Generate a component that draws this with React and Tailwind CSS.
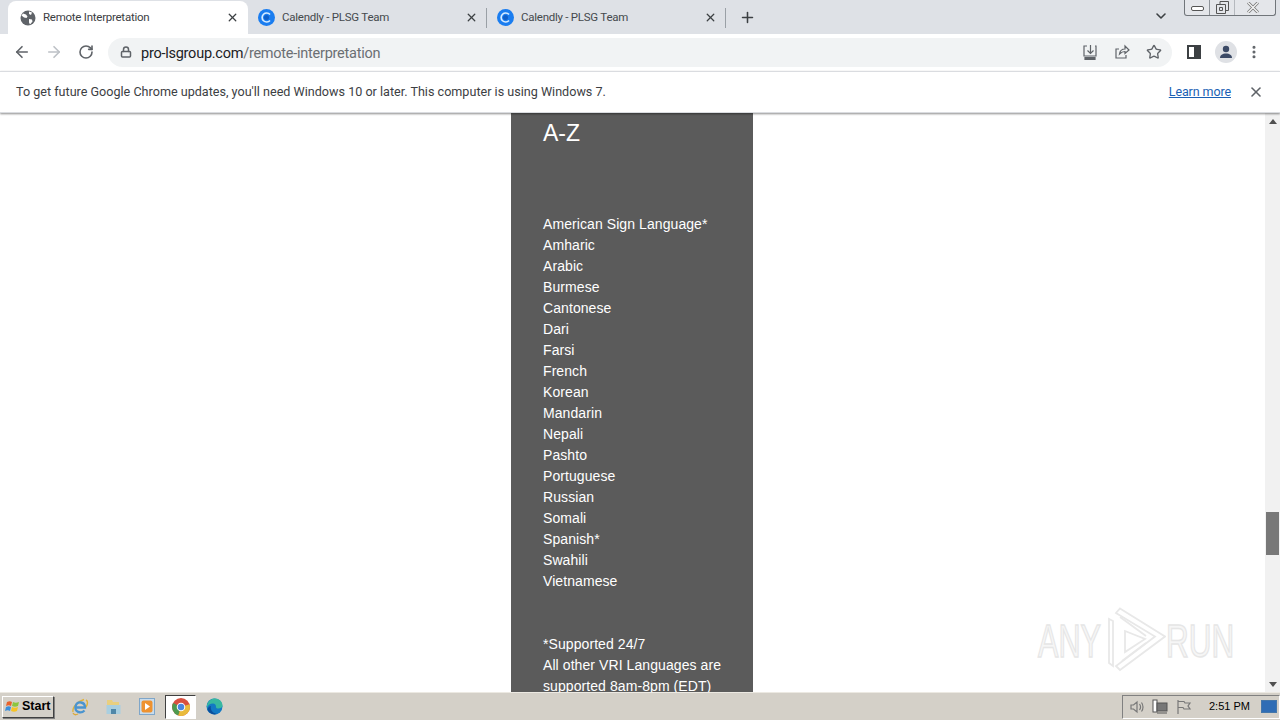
import { ArrowLeft, ArrowRight, RotateCw, Lock, X, Plus, ChevronDown, Star, MoreVertical } from "lucide-react";

const languages = [
  "American Sign Language*",
  "Amharic",
  "Arabic",
  "Burmese",
  "Cantonese",
  "Dari",
  "Farsi",
  "French",
  "Korean",
  "Mandarin",
  "Nepali",
  "Pashto",
  "Portuguese",
  "Russian",
  "Somali",
  "Spanish*",
  "Swahili",
  "Vietnamese",
];

const GlobeIcon = () => (
  <svg width="16" height="16" viewBox="0 0 16 16" className="shrink-0">
    <circle cx="8" cy="8" r="7.5" fill="#5f6368" />
    <path d="M3 3.500l3 1 1.500 2-1 1.500-2.500-.5-2.500-2zM9 9l3 .5.5 2-2.500 3-1-2zM9 1.500l3 1-1 2.500-2-1z" fill="#fff" />
  </svg>
);

const CalendlyIcon = () => (
  <svg width="17" height="17" viewBox="0 0 17 17" className="shrink-0">
    <circle cx="8.500" cy="8.500" r="8.500" fill="#1a7df0" />
    <path d="M12 5.500A4.500 4.500 0 1 0 12 11.500" fill="none" stroke="#d7ecff" strokeWidth="1.700" />
    <circle cx="8.500" cy="8.500" r="2.500" fill="#0f5fc8" />
  </svg>
);

const Tab = ({ icon, title, active, divider }) => (
  <div
    className={`relative flex h-[33px] items-center ${active ? "w-[240px] rounded-t-lg bg-white pl-[12px] pr-[9px]" : "w-[239px] pl-[10px] pr-[9px]"}`}
  >
    {icon}
    <span className={`ml-[7px] flex-1 text-[11.500px] tracking-[-0.25px] ${active ? "text-[#3c4043]" : "text-[#45494d]"}`}>{title}</span>
    <X size={13} strokeWidth={2.4} className="text-[#3c4043]" />
    {divider && <div className="absolute right-0 top-[7px] h-[20px] w-px bg-[#9aa0a6]" />}
  </div>
);

const ChromeLogo = () => (
  <svg width="18" height="18" viewBox="0 0 16 16">
    <circle cx="8" cy="8" r="8" fill="#d9503f" />
    <path d="M8 8L1 4.400A8 8 0 0 0 5.600 15.600z" fill="#4e9a4f" />
    <path d="M8 8l7.600-2.400A8 8 0 0 1 5.600 15.600z" fill="#e9bb3c" />
    <circle cx="8" cy="8" r="3.800" fill="#fff" />
    <circle cx="8" cy="8" r="2.900" fill="#4a86e0" />
  </svg>
);

const EdgeLogo = () => (
  <svg width="17" height="17" viewBox="0 0 17 17">
    <circle cx="8.500" cy="8.500" r="8" fill="#1279c4" />
    <path d="M1 7C2.500 2 6 .5 9 .5c4 0 7.500 3 7.500 7 0 2-2 3-4 3-1.500 0-2.500-.5-2.500-1.500C10 7 9 5.500 7 5.500 4 5.500 1.500 7.500 1 10z" fill="#37b8a0" />
    <path d="M5 8c-1 3 1 7.500 6 8-4 1.500-8-1-9.500-4C2 9 3.500 8 5 8z" fill="#0b4f9c" />
  </svg>
);

const StartFlag = () => (
  <svg width="16" height="15" viewBox="0 0 16 15">
    <path d="M2 3c2-1 3.500-1 5 0L6 7C4.500 6 3 6 1 7z" fill="#e8622c" />
    <path d="M8 3c2 1 3.500 1 6 0l-1 4c-2 1-4 1-6 0z" fill="#8cc63f" />
    <path d="M1 8c2-1 3.500-1 5 0l-1 4c-1.500-1-3-1-5 0z" fill="#3a8fdc" />
    <path d="M7 8c2 1 4 1 6 0l-1 4c-2 1-4 1-6 0z" fill="#f7c325" />
  </svg>
);

const IeLogo = () => (
  <svg width="18" height="18" viewBox="0 0 18 18">
    <path d="M2 14C1 9 7 3 13 1.500M15 2c2 1 2 4 0 7" fill="none" stroke="#e0b23a" strokeWidth="1.400" />
    <path d="M5 9.500h9c0-6-8-7-9.500-1-1 5 5 8 9 4" fill="none" stroke="#4a94cf" strokeWidth="2.300" />
    <path d="M2 15c1 2 3 2 5 1" fill="none" stroke="#d9a93c" strokeWidth="1.300" />
  </svg>
);

const FolderIcon = () => (
  <svg width="17" height="17" viewBox="0 0 17 17">
    <path d="M2 2h5l1 2h6v4H2z" fill="#e9cf7f" />
    <path d="M1.500 7h14v9h-14z" fill="#a9cfe0" />
    <path d="M6 16v-5h5v5z" fill="#4f87a8" />
  </svg>
);

const MediaIcon = () => (
  <svg width="16" height="17" viewBox="0 0 16 17">
    <rect x="0.500" y="0.500" width="15" height="16" fill="#c9dcec" stroke="#7fa6c9" />
    <rect x="2.500" y="2.500" width="11" height="12" rx="2" fill="#ee9230" />
    <path d="M6 5l5 3.500L6 12z" fill="#fff" />
  </svg>
);

const App = () => (
  <div className="flex h-screen w-full flex-col overflow-hidden bg-white font-['Roboto',sans-serif]">
    {/* tab strip */}
    <div className="relative flex h-[34px] shrink-0 items-end bg-[#dee1e6] pl-[8px]">
      <Tab active icon={<GlobeIcon />} title="Remote Interpretation" />
      <Tab icon={<CalendlyIcon />} title="Calendly - PLSG Team" divider />
      <Tab icon={<CalendlyIcon />} title="Calendly - PLSG Team" divider />
      <Plus size={17} strokeWidth={2.2} className="mb-[8px] ml-[13px] text-[#3c4043]" />
      <ChevronDown size={16} strokeWidth={2.4} className="absolute left-[1153px] top-[8px] text-[#3c4043]" />
      {/* window buttons */}
      <div className="absolute left-[1184px] top-0 flex h-[16px] w-[92px] rounded-b-[3px] border border-t-0 border-[#70757a] bg-[#e4e6ea]">
        <div className="flex w-[25px] items-center justify-center border-r border-[#8f949a] pt-px">
          <div className="h-[5px] w-[13px] rounded-[2px] border border-[#555] bg-white" />
        </div>
        <div className="flex w-[25px] items-center justify-center border-r border-[#b5b9be]">
          <svg width="13" height="13" viewBox="0 0 13 13" fill="none" stroke="#555">
            <path d="M4 3V.5h8.500v9H10M.5 3.500h9v9h-9zM3.500 6.500h3v3h-3z" />
          </svg>
        </div>
        <div className="flex flex-1 items-center justify-center pr-[4px]">
          <svg width="12" height="11" viewBox="0 0 12 11">
            <path d="M1 .5l10 10M11 .5l-10 10" stroke="#777" strokeWidth="3" />
            <path d="M1 .5l10 10M11 .5l-10 10" stroke="#f4f4f4" strokeWidth="1.400" />
          </svg>
        </div>
      </div>
    </div>

    {/* toolbar */}
    <div className="flex h-[37px] shrink-0 items-center bg-white pb-px pl-[13px]">
      <ArrowLeft size={18} strokeWidth={2.2} className="text-[#5f6368]" />
      <ArrowRight size={18} strokeWidth={2.2} className="ml-[14px] text-[#bdc1c6]" />
      <RotateCw size={16} strokeWidth={2.4} className="ml-[15px] text-[#5f6368]" />
      <div className="ml-[14px] flex h-[29px] w-[1064px] items-center rounded-full bg-[#f1f3f4] pl-[12px]">
        <Lock size={12} strokeWidth={3} className="text-[#5f6368]" />
        <span className="ml-[9px] flex-1 pt-[3px] text-[14.500px] tracking-[-0.25px] text-[#202124]">
          pro-lsgroup.com<span className="text-[#6b6f73]">/remote-interpretation</span>
        </span>
        <svg width="16" height="16" viewBox="0 0 16 16" fill="none" stroke="#5f6368" strokeWidth="1.200">
          <path d="M5 2H2v10h12V2h-1M8.500 1v8M5.500 6.500l3 3 3-3" />
          <path d="M3 13.500h10v2H3z" fill="#5f6368" />
        </svg>
        <svg width="16" height="16" viewBox="0 0 16 16" fill="none" stroke="#5f6368" strokeWidth="1.200" className="ml-[16px]">
          <path d="M5 5H2v9h10v-3M5.500 10c.5-3.500 3-5 5.500-5V2l4 4-4 3.500V7.500c-2 0-4 1-5.500 2.500z" />
        </svg>
        <Star size={16} strokeWidth={2} className="ml-[16px] mr-[10px] text-[#5f6368]" />
      </div>
      <div className="ml-[15px] flex h-[14px] w-[14px] justify-end border-[2px] border-[#3c4043]">
        <div className="h-full w-[5px] bg-[#3c4043]" />
      </div>
      <div className="ml-[14px] flex h-[22px] w-[22px] items-center justify-center overflow-hidden rounded-full bg-[#dfe1e5]">
        <svg width="14" height="16" viewBox="0 0 14 16" fill="#3c4a66">
          <circle cx="7" cy="5" r="3.200" />
          <path d="M1 14c0-3 2.500-4.500 6-4.500s6 1.500 6 4.500z" />
        </svg>
      </div>
      <MoreVertical size={16} strokeWidth={2.6} className="ml-[9px] text-[#5f6368]" />
    </div>

    {/* infobar */}
    <div className="z-10 flex h-[42px] shrink-0 items-center border-y border-[#dadce0] bg-white pl-[16px] pr-[16px] shadow-[0_1px_2px_rgba(0,0,0,0.45)]">
      <span className="flex-1 text-[12.600px] text-[#3c4043]">
        To get future Google Chrome updates, you'll need Windows 10 or later. This computer is using Windows 7.
      </span>
      <a className="text-[12.500px] tracking-[-0.1px] text-[#1a5fb4] underline">Learn more</a>
      <X size={16} strokeWidth={2.4} className="ml-[17px] text-[#5f6368]" />
    </div>

    {/* page */}
    <div className="relative flex min-h-0 flex-1 overflow-hidden bg-white">
      <div className="ml-[511px] w-[242px] shrink-0 bg-[#5b5b5b] pl-[32px] pr-[24px] pt-[5px] font-['Liberation_Sans',sans-serif] text-white">
        <div className="text-[23px] leading-[30px]">A-Z</div>
        <div className="mt-[66px] text-[14px] leading-[21px] tracking-[0.08px]">
          {languages.map((name) => (
            <div key={name}>{name}</div>
          ))}
        </div>
        <div className="mt-[42px] text-[14px] leading-[21px] tracking-[0.08px]">
          <div>*Supported 24/7</div>
          <div>All other VRI Languages are supported 8am-8pm (EDT)</div>
        </div>
      </div>

      {/* watermark */}
      <div className="absolute left-[1038px] top-[494px] flex h-[66px] w-[196px] items-center font-['Liberation_Sans',sans-serif] text-[47px] leading-none text-[#f6f6f6] [-webkit-text-stroke:1.500px_#e6e6e6]">
        <div className="w-[70px] origin-left scale-x-[0.65] whitespace-nowrap">ANY</div>
        <svg width="58" height="66" viewBox="0 0 58 66" fill="none" stroke="#e8e8e8" strokeWidth="1.800">
          <path d="M1 12v44l4 3V14zM12 1.500L57 29.500 12 63l-4-4 39-29.500L8 6z" />
          <path d="M12 10l26 19M17 24l20 8-20 13z" />
          <path d="M14 54l24-18" />
        </svg>
        <div className="w-[68px] origin-left scale-x-[0.67] whitespace-nowrap">RUN</div>
      </div>

      {/* scrollbar */}
      <div className="absolute bottom-0 right-0 top-0 flex w-[15px] flex-col items-center bg-[#f1f1f1]">
        <div className="mt-[6px] h-0 w-0 border-x-[4px] border-b-[5px] border-x-transparent border-b-[#505050]" />
        <div className="mt-[388px] h-[43px] w-[13px] bg-[#787878]" />
        <div className="mb-[5px] mt-auto h-0 w-0 border-x-[4px] border-t-[5px] border-x-transparent border-t-[#505050]" />
      </div>
    </div>

    {/* taskbar */}
    <div className="flex h-[28px] shrink-0 items-center border-t border-[#ece9e2] bg-[#d4d0c8] pl-[2px]">
      <div className="flex h-[22px] w-[52px] items-center border border-b-[#404040] border-l-white border-r-[#404040] border-t-white pl-[2px] shadow-[1px_1px_0_#808080]">
        <StartFlag />
        <span className="ml-px font-['Liberation_Sans',sans-serif] text-[12.500px] font-bold text-black">Start</span>
      </div>
      <div className="ml-[17px] flex w-[18px] justify-center"><IeLogo /></div>
      <div className="ml-[15px] flex w-[18px] justify-center"><FolderIcon /></div>
      <div className="ml-[16px] flex w-[18px] justify-center"><MediaIcon /></div>
      <div className="ml-[9px] flex h-[24px] w-[31px] items-center justify-center border border-b-white border-l-[#404040] border-r-white border-t-[#404040] bg-white"><ChromeLogo /></div>
      <div className="ml-[9px] flex w-[18px] justify-center"><EdgeLogo /></div>
      <div className="ml-auto flex h-[24px] w-[158px] items-center border border-b-white border-l-[#808080] border-r-white border-t-[#808080] pl-[6px]">
        <svg width="16" height="16" viewBox="0 0 16 16" fill="none" stroke="#777" strokeWidth="1.200">
          <path d="M2 6h2.500L8 3v10l-3.500-3H2zM10.500 5c1.300 1.800 1.300 4.200 0 6M12.500 3.500c2 2.500 2 6.500 0 9" />
        </svg>
        <svg width="17" height="16" viewBox="0 0 17 16" className="ml-[7px]">
          <rect x="1" y="1" width="4" height="12" fill="#fff" stroke="#555" />
          <rect x="5" y="4" width="10" height="8" fill="#777" stroke="#555" />
          <path d="M5 14h10" stroke="#555" />
        </svg>
        <svg width="16" height="16" viewBox="0 0 16 16" fill="none" stroke="#777" strokeWidth="1.200" className="ml-[7px]">
          <path d="M2 1v14M2 2.500h6l1 1.500h5l-2 3 2 3H8l-1-1.500H2" />
        </svg>
        <span className="ml-[17px] w-[40px] whitespace-nowrap font-['Liberation_Sans',sans-serif] text-[11px] text-black">2:51 PM</span>
        <div className="ml-[12px] h-[13px] w-[16px] border border-[#47a] bg-[#2f6db5]" />
      </div>
    </div>
  </div>
);

export default App;
